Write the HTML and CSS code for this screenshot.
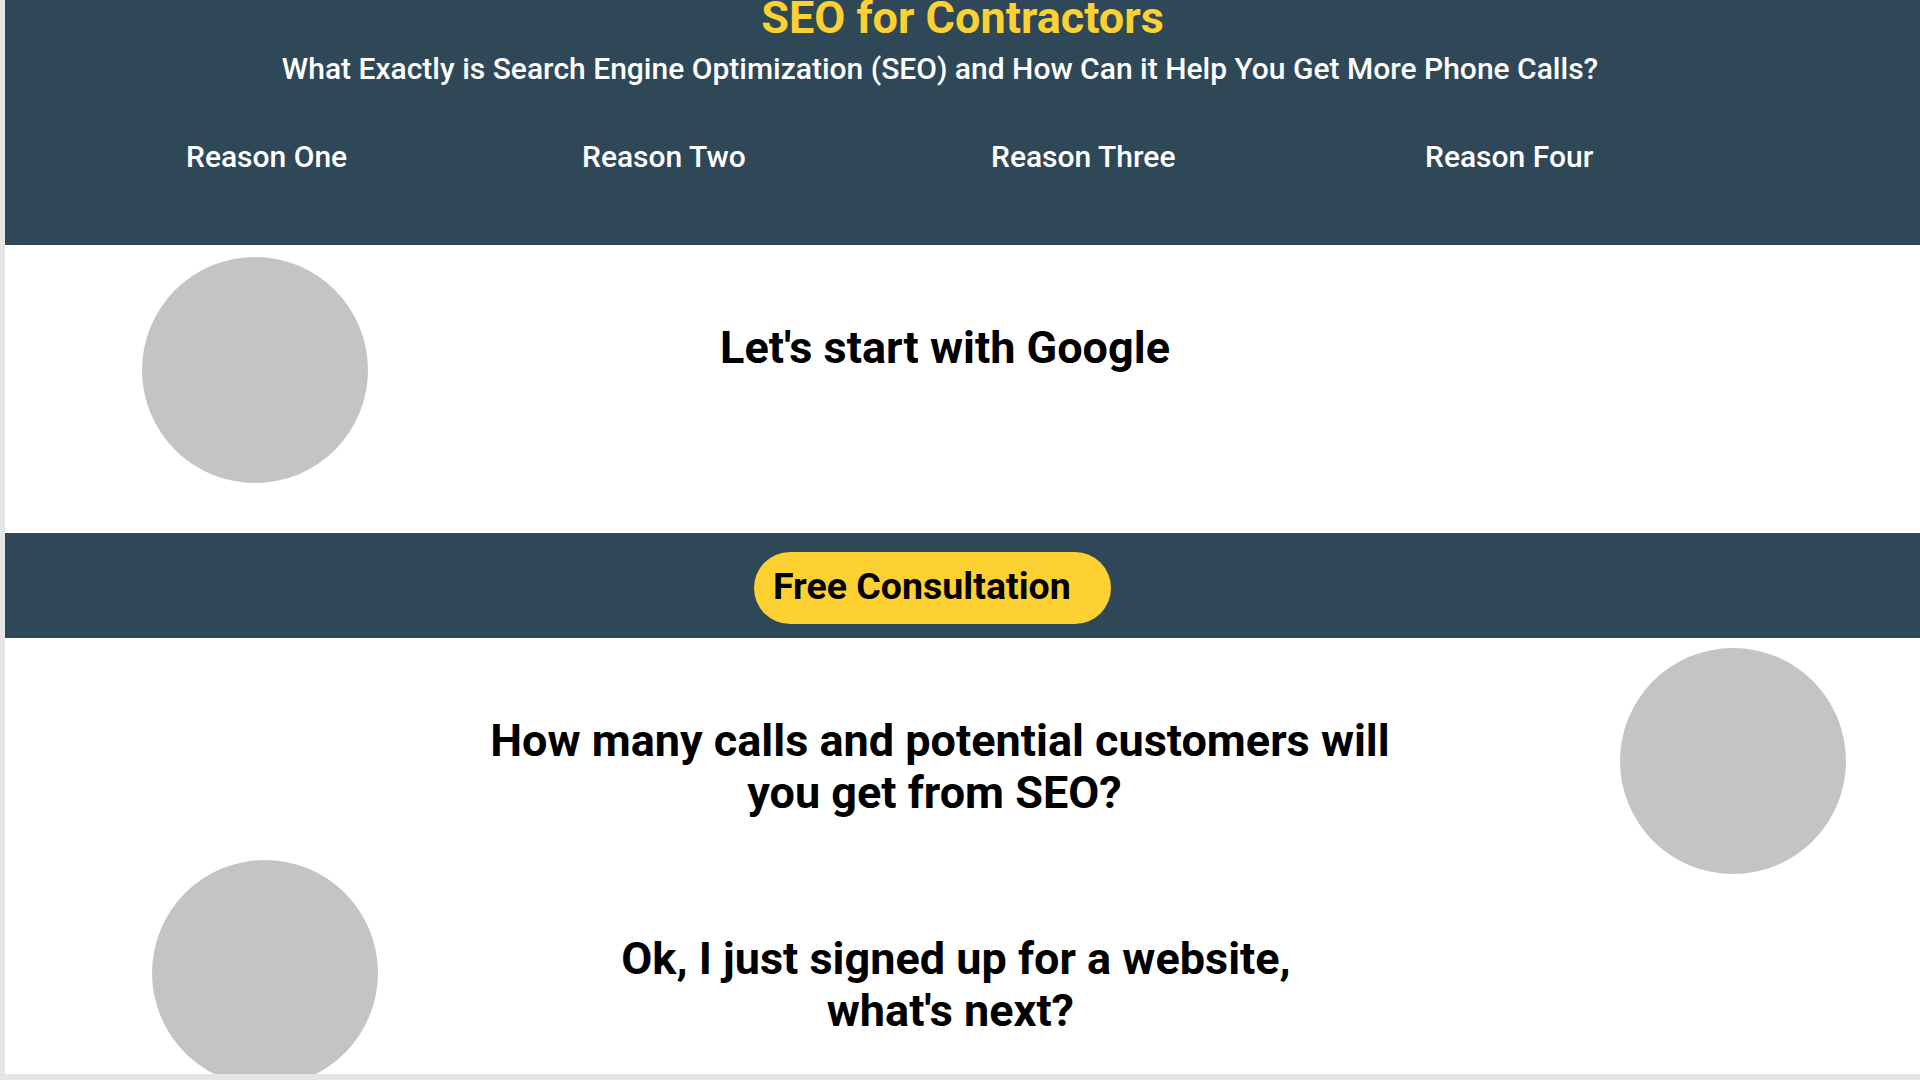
FILE: index.html
```html
<!DOCTYPE html>
<html lang="en">
<head>
<meta charset="utf-8">
<title>SEO for Contractors</title>
<link rel="stylesheet" href="styles.css">
</head>
<body>
<div class="page">
  <header class="hero">
    <h1 class="hero-title">SEO for Contractors</h1>
    <p class="hero-sub">What Exactly is Search Engine Optimization (SEO) and How Can it Help You Get More Phone Calls?</p>
    <nav class="reasons">
      <span class="reason">Reason One</span>
      <span class="reason">Reason Two</span>
      <span class="reason">Reason Three</span>
      <span class="reason">Reason Four</span>
    </nav>
  </header>

  <section class="google">
    <div class="circle"></div>
    <h2 class="heading heading-google">Let's start with Google</h2>
  </section>

  <section class="cta">
    <a class="cta-btn" href="#">Free Consultation</a>
  </section>

  <section class="qa">
    <div class="qa-row qa-row-a">
      <h2 class="heading heading-calls">How many calls and potential customers will you get from SEO?&nbsp;</h2>
      <div class="circle circle-right"></div>
    </div>
    <div class="qa-row qa-row-b">
      <div class="circle circle-left"></div>
      <h2 class="heading heading-next">Ok, I just signed up for a website, what's next?&nbsp;</h2>
    </div>
  </section>
</div>
</body>
</html>
```
FILE: styles.css
```css
* { box-sizing: border-box; }

html, body {
  margin: 0;
  padding: 0;
  background: #e5e5e5;
  font-family: Roboto, "Liberation Sans", Arial, sans-serif;
}

.page {
  margin-left: 5px;
  height: 1074px;
  overflow: hidden;
  background: #ffffff;
}

.hero {
  height: 245px;
  background: #2f4858;
  color: #ffffff;
}

.hero-title {
  margin: 0;
  font-size: 45px;
  line-height: 35px;
  font-weight: 700;
  color: #fdd131;
  text-align: center;
}

.hero-sub {
  margin: 16px 0 0 0;
  padding-right: 45px;
  font-size: 30px;
  line-height: 35px;
  font-weight: 500;
  text-align: center;
}

.reasons {
  display: grid;
  grid-template-columns: 396px 409px 434px auto;
  margin-top: 53px;
  padding-left: 181px;
}

.reason {
  font-size: 30px;
  line-height: 35px;
  font-weight: 500;
}

.circle {
  flex: none;
  width: 226px;
  height: 226px;
  border-radius: 50%;
  background: #c4c4c4;
}

.heading {
  margin: 0;
  font-size: 45px;
  line-height: 52px;
  font-weight: 700;
  color: #000000;
  text-align: center;
}

.google {
  display: flex;
  align-items: flex-start;
  height: 288px;
  padding: 12px 0 0 137px;
}

.heading-google {
  width: 600px;
  margin-top: 65px;
  margin-left: 277px;
}

.cta {
  height: 105px;
  background: #2f4858;
  padding: 19px 0 0 749px;
}

.cta-btn {
  display: block;
  width: 357px;
  height: 72px;
  padding-left: 19px;
  border-radius: 36px;
  background: #fdd131;
  color: #000000;
  font-size: 37.5px;
  line-height: 68px;
  font-weight: 700;
  text-decoration: none;
}

.qa-row {
  display: flex;
  align-items: flex-start;
}

.qa-row-a {
  height: 222px;
  padding-left: 465px;
}

.heading-calls {
  width: 940px;
  margin-top: 77px;
}

.circle-right {
  margin-top: 10px;
  margin-left: 210px;
}

.qa-row-b {
  padding-left: 147px;
}

.heading-next {
  width: 720px;
  margin-top: 73px;
  margin-left: 218px;
}
```
